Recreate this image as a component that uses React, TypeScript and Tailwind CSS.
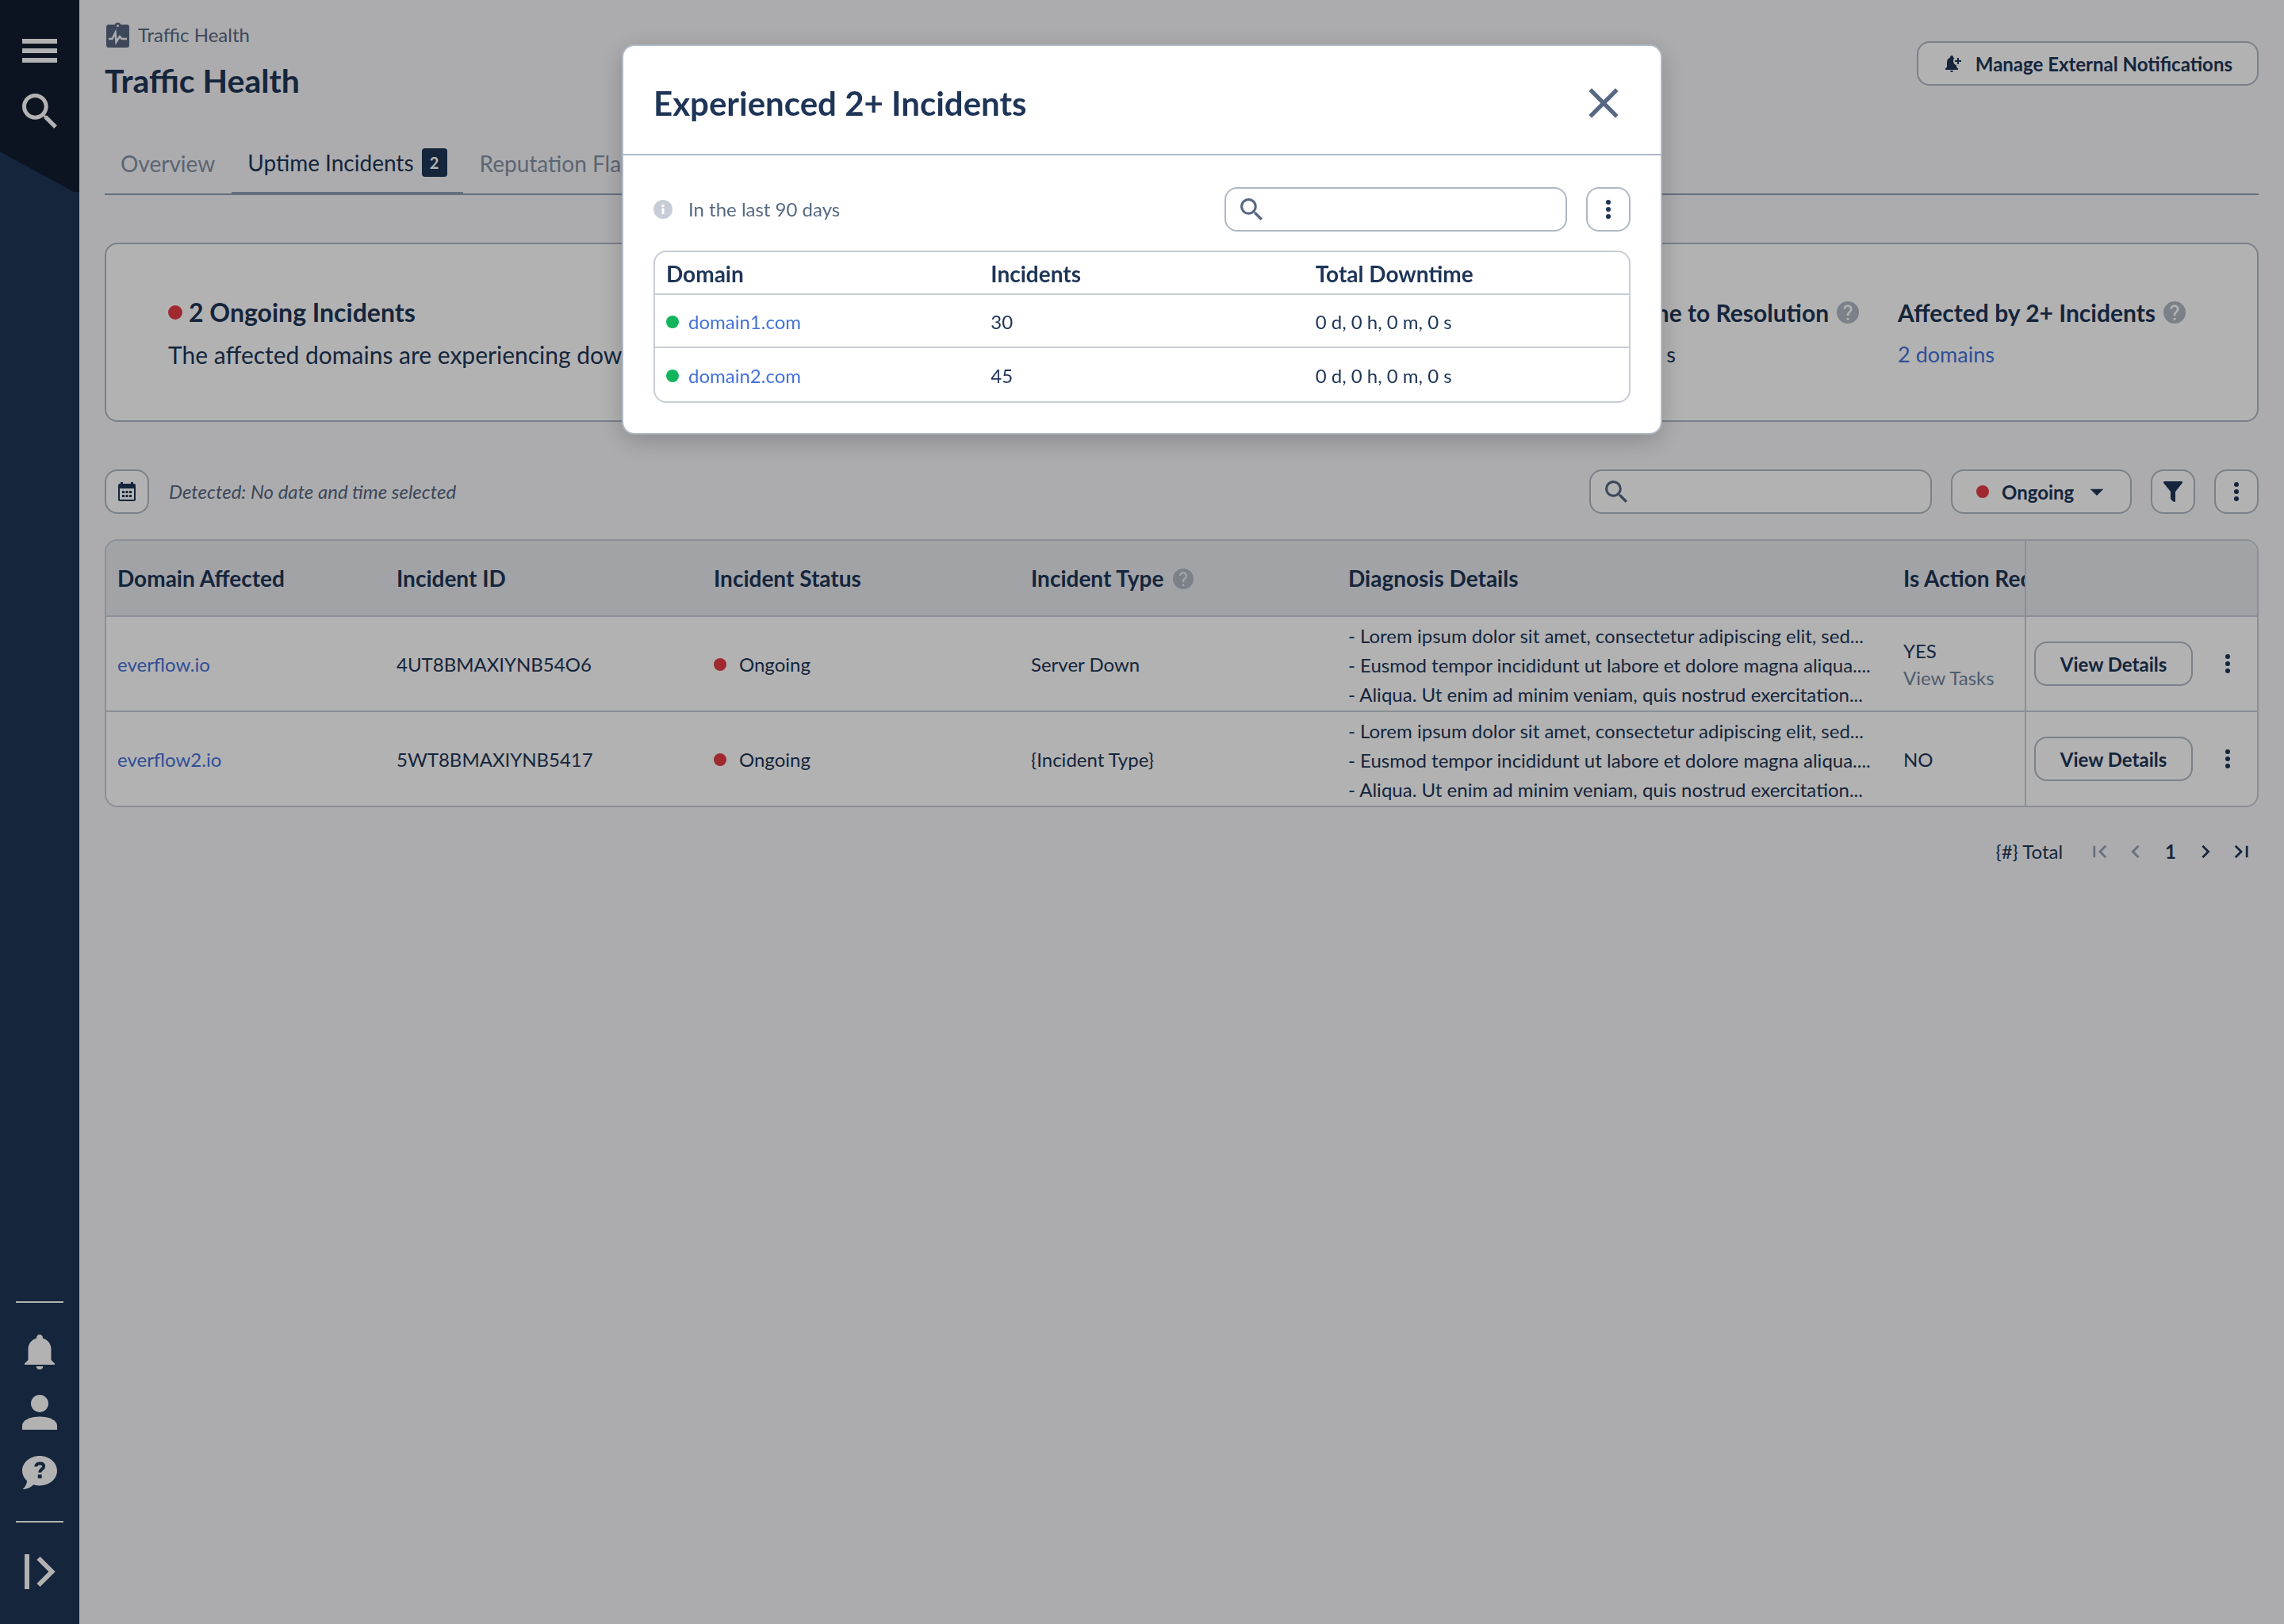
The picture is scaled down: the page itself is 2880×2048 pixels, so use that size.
import type { ReactNode } from "react";
import { MdArrowDropDown, MdClose } from "react-icons/md";

const LINES = [
  "- Lorem ipsum dolor sit amet, consectetur adipiscing elit, sed...",
  "- Eusmod tempor incididunt ut labore et dolore magna aliqua....",
  "- Aliqua. Ut enim ad minim veniam, quis nostrud exercitation...",
];

const incidents = [
  { domain: "everflow.io", id: "4UT8BMAXIYNB54O6", type: "Server Down", action: "YES", tasks: true },
  { domain: "everflow2.io", id: "5WT8BMAXIYNB5417", type: "{Incident Type}", action: "NO", tasks: false },
];

const domains = [
  { name: "domain1.com", count: 30, downtime: "0 d, 0 h, 0 m, 0 s" },
  { name: "domain2.com", count: 45, downtime: "0 d, 0 h, 0 m, 0 s" },
];

export default function App() {
  return (
    <div className="flex min-h-screen bg-[#f6f6f9] font-[Lato,sans-serif] text-2xl text-[#1e3557]">
      <Sidebar />

      <main className="min-w-0 flex-1 px-8 pb-16">
        <header className="flex items-start justify-between pt-6">
          <div>
            <a href="#traffic" className="flex items-center gap-[10px] pl-0.5 text-[#566882]">
              <ClipboardPulse />
              <span className="leading-10">Traffic Health</span>
            </a>
            <h1 className="mt-3 text-[41px] leading-[52px] font-bold">Traffic Health</h1>
          </div>
          <button className="mt-7 flex h-14 items-center gap-4 rounded-2xl border-2 border-[#b0b8c4] bg-white pt-0.5 pr-[31px] pl-[34px] font-bold">
            <BellPlus />
            Manage External Notifications
          </button>
        </header>

        <nav className="mt-10 flex gap-px border-b-2 border-[#919fb3] text-[28px] leading-9 text-[#8491a5]">
          <a href="#overview" className="px-5 pt-5 pb-5">
            Overview
          </a>
          <a
            href="#uptime"
            aria-current="page"
            className="flex items-center gap-[10px] border-b-2 border-[#919fb3] px-5 text-[#1e3557]"
          >
            Uptime Incidents
            <span className="flex h-9 w-8 items-center justify-center rounded bg-[#1e3557] text-xl font-bold text-white">
              2
            </span>
          </a>
          <a href="#reputation" className="px-5 pt-5 pb-5">
            Reputation Flags
          </a>
        </nav>

        <section className="mt-[60px] flex h-[226px] items-center justify-between rounded-2xl border-2 border-[#b0b8c4] bg-white pt-1 pr-[90px] pl-[78px]">
          <div>
            <h2 className="flex items-center gap-2 text-[32px] leading-[52px] font-bold">
              <Dot className="size-[18px] bg-[#e63b46]" />2 Ongoing Incidents
            </h2>
            <p className="text-[30px] leading-[54px]">The affected domains are experiencing downtime.</p>
          </div>
          <div className="flex gap-[49px]">
            <div>
              <h2 className="flex items-center gap-[10px] text-[30px] leading-[52px] font-bold">
                Average Time to Resolution
                <HelpIcon className="size-7" />
              </h2>
              <p className="text-[27px] leading-[54px]">12 h, 30 m, 0 s</p>
            </div>
            <div>
              <h2 className="flex items-center gap-[10px] text-[30px] leading-[52px] font-bold">
                Affected by 2+ Incidents
                <HelpIcon className="size-7" />
              </h2>
              <a href="#domains" className="text-[27px] leading-[54px] text-[#4472d8]">
                2 domains
              </a>
            </div>
          </div>
        </section>

        <div className="mt-[60px] flex items-center gap-6">
          <IconButton label="Pick dates">
            <CalendarIcon />
          </IconButton>
          <p className="flex-1 pl-px text-[#566882] italic">Detected: No date and time selected</p>
          <SearchField label="Search incidents" />
          <div className="relative">
            <select
              aria-label="Status"
              className="block h-14 w-[228px] appearance-none rounded-2xl border-2 border-[#b0b8c4] bg-white pt-0.5 pl-[62px] font-bold"
            >
              <option>Ongoing</option>
            </select>
            <Dot className="pointer-events-none absolute top-5 left-8 size-4 bg-[#e63b46]" />
            <MdArrowDropDown className="pointer-events-none absolute top-2 right-6 size-10" />
          </div>
          <IconButton label="Filter">
            <svg viewBox="4 3 16 18" className="h-[26px] w-6" fill="currentColor" preserveAspectRatio="none">
              <path d="M14 12v7.88c.04.3-.06.62-.29.83a1 1 0 0 1-1.41 0l-2.01-2.01a1 1 0 0 1-.29-.83V12h-.03L4.21 4.62a1 1 0 0 1 .17-1.4c.19-.14.4-.22.62-.22h14c.22 0 .43.08.62.22a1 1 0 0 1 .17 1.4L14.03 12z" />
            </svg>
          </IconButton>
          <IconButton label="More options">
            <MoreIcon />
          </IconButton>
        </div>

        <div className="mt-8 overflow-hidden rounded-2xl border-2 border-[#c8ccd6] bg-white">
          <table className="w-full table-fixed border-separate border-spacing-0 text-left">
            <colgroup>
              <col className="w-[352px]" />
              <col className="w-[400px]" />
              <col className="w-[400px]" />
              <col className="w-[400px]" />
              <col />
              <col className="w-[167px]" />
              <col className="w-[293px]" />
            </colgroup>
            <thead className="bg-[#e9eaf0] text-[28px]">
              <tr>
                <HeadCell>Domain Affected</HeadCell>
                <HeadCell>Incident ID</HeadCell>
                <HeadCell>Incident Status</HeadCell>
                <HeadCell>
                  <span className="flex items-center gap-3">
                    Incident Type
                    <HelpIcon className="size-[26px]" />
                  </span>
                </HeadCell>
                <HeadCell>Diagnosis Details</HeadCell>
                <HeadCell>Is Action Required</HeadCell>
                <th aria-label="Actions" className="border-b-2 border-l-2 border-[#c8ccd6]" />
              </tr>
            </thead>
            <tbody className="[&>tr:last-child>td]:h-[118px] [&>tr:last-child>td]:border-b-0">
              {incidents.map((row) => (
                <tr key={row.id}>
                  <Cell>
                    <a href={`#${row.domain}`} className="text-[#4472d8]">
                      {row.domain}
                    </a>
                  </Cell>
                  <Cell>{row.id}</Cell>
                  <Cell>
                    <span className="flex items-center gap-4">
                      <Dot className="size-4 bg-[#e63b46]" />
                      Ongoing
                    </span>
                  </Cell>
                  <Cell>{row.type}</Cell>
                  <Cell>
                    {LINES.map((line) => (
                      <p key={line} className="leading-[37px]">
                        {line}
                      </p>
                    ))}
                  </Cell>
                  <Cell>
                    <p className="leading-[34px]">{row.action}</p>
                    {row.tasks && (
                      <a href="#tasks" className="block leading-[34px] text-[#7385a0]">
                        View Tasks
                      </a>
                    )}
                  </Cell>
                  <td className="h-[120px] border-b-2 border-l-2 border-[#c8ccd6] pl-[10px]">
                    <div className="flex items-center gap-8">
                      <button className="h-14 w-[200px] rounded-2xl border-2 border-[#b0b8c4] bg-white pt-0.5 font-bold">
                        View Details
                      </button>
                      <button aria-label="Row options">
                        <MoreIcon />
                      </button>
                    </div>
                  </td>
                </tr>
              ))}
            </tbody>
          </table>
        </div>

        <nav aria-label="Pagination" className="mt-10 flex items-center justify-end pr-[13px]">
          <span className="mr-[38px]">{"{#} Total"}</span>
          <div className="flex items-center gap-[27px]">
            <PageButton label="First page" disabled>
              <path d="M2 2v16M18 2l-8 8 8 8" />
            </PageButton>
            <PageButton label="Previous page" disabled>
              <path d="M14 2l-8 8 8 8" />
            </PageButton>
            <span className="px-px font-bold">1</span>
            <PageButton label="Next page">
              <path d="M6 2l8 8-8 8" />
            </PageButton>
            <PageButton label="Last page">
              <path d="M2 2l8 8-8 8M18 2v16" />
            </PageButton>
          </div>
        </nav>
      </main>

      <div className="fixed inset-0 flex items-start justify-center bg-black/30 pt-14">
        <IncidentsDialog />
      </div>
    </div>
  );
}

function Sidebar() {
  return (
    <aside className="flex w-[100px] shrink-0 flex-col items-center bg-[#1e3557] text-white">
      <div className="flex h-[242px] w-full flex-col items-center bg-[#111d2f] pt-[49px] [clip-path:polygon(0_0,100%_0,100%_100%,93%_100%,0_79%)]">
        <button aria-label="Menu">
          <svg viewBox="0 0 44 30" className="h-[30px] w-11" fill="currentColor">
            <path d="M0 0h44v6H0zM0 12h44v6H0zM0 24h44v6H0z" />
          </svg>
        </button>
        <button aria-label="Search" className="mt-[39px]">
          <SearchIcon className="size-11" />
        </button>
      </div>

      <div className="mt-auto flex w-full flex-col items-center pb-11">
        <hr className="w-[60px] border-t-2 border-white" />
        <button aria-label="Notifications" className="mt-10">
          <svg viewBox="0 0 38 44" className="h-11 w-[38px]" fill="currentColor">
            <path d="M19 0c2.300 0 4 1.700 4 4v.7C29 6.300 33.500 11.500 33.500 18v14l4.500 4.500V38H0v-1.500L4.500 32V18C4.500 11.500 9 6.300 15 4.700V4c0-2.300 1.700-4 4-4zM14.700 40h8.600c0 2.400-1.900 4-4.300 4s-4.300-1.600-4.300-4z" />
          </svg>
        </button>
        <button aria-label="Account" className="mt-8">
          <svg viewBox="0 0 44 44" className="size-11" fill="currentColor">
            <circle cx="22" cy="11" r="11" />
            <path d="M22 27.500c-12.200 0-22 4.900-22 11V44h44v-5.500c0-6.100-9.800-11-22-11z" />
          </svg>
        </button>
        <button aria-label="Help" className="mt-[33px]">
          <svg viewBox="0 0 44 42" className="h-[42px] w-11" fill="currentColor">
            <path d="M22 0c12.150 0 22 8.300 22 18.700s-9.850 18.700-22 18.700c-2.700 0-5.300-.4-7.700-1.200C11 39.500 6.500 42 .6 42c3.200-3 5.200-6.500 5.400-10.500C2.300 28.200 0 23.700 0 18.700 0 8.300 9.850 0 22 0z" />
            <path
              d="M17.300 13.500c0-2.400 1.900-4 4.900-4s5 1.400 5 3.800c0 3.200-5 3.500-5 7.700"
              fill="none"
              stroke="#1e3557"
              strokeWidth="4"
            />
            <path d="M19.800 23.500h4.800v4.800h-4.800z" fill="#1e3557" />
          </svg>
        </button>
        <hr className="mt-10 w-[60px] border-t-2 border-white" />
        <button aria-label="Expand sidebar" className="mt-10">
          <svg viewBox="0 0 40 44" className="h-11 w-10" fill="none" stroke="currentColor" strokeWidth="6">
            <path d="M4 0v44M18.500 5l17 17-17 17" />
          </svg>
        </button>
      </div>
    </aside>
  );
}

function IncidentsDialog() {
  return (
    <div
      role="dialog"
      aria-labelledby="dialog-title"
      className="w-full max-w-[1312px] rounded-2xl border-2 border-[#b0b8c4] bg-white shadow-[0_8px_32px_rgba(0,0,0,0.2)]"
    >
      <div className="flex h-[138px] items-center justify-between border-b-2 border-[#b0b8c4] pt-2 pr-[52px] pl-[38px]">
        <h2 id="dialog-title" className="text-[42px] font-bold">
          Experienced 2+ Incidents
        </h2>
        <button aria-label="Close" className="text-[#566882]">
          <MdClose viewBox="4.500 4.500 15 15" className="size-10" />
        </button>
      </div>

      <div className="px-[38px] pt-10 pb-[38px]">
        <div className="flex items-center gap-6">
          <p className="flex flex-1 items-center gap-5 text-[#566882]">
            <svg viewBox="0 0 24 24" className="size-6 text-[#c8ccd6]" fill="currentColor">
              <circle cx="12" cy="12" r="12" />
              <path d="M10.500 6h3v3h-3zM10.500 10.500h3V18h-3z" fill="#fff" />
            </svg>
            In the last 90 days
          </p>
          <SearchField label="Search domains" />
          <IconButton label="More options">
            <MoreIcon />
          </IconButton>
        </div>

        <div className="mt-6 overflow-hidden rounded-2xl border-2 border-[#c8ccd6]">
          <table className="w-full table-fixed border-separate border-spacing-0 text-left">
            <thead className="text-[28px]">
              <tr>
                {["Domain", "Incidents", "Total Downtime"].map((title) => (
                  <th key={title} className="h-[54px] border-b-2 border-[#c8ccd6] pt-0.5 pl-[14px] leading-10">
                    {title}
                  </th>
                ))}
              </tr>
            </thead>
            <tbody className="[&>tr:last-child>td]:border-b-0">
              {domains.map((row) => (
                <tr
                  key={row.name}
                  className="[&>td]:h-[67px] [&>td]:border-b-2 [&>td]:border-[#c8ccd6] [&>td]:pt-[3px] [&>td]:pl-[14px]"
                >
                  <td>
                    <span className="flex items-center gap-3">
                      <Dot className="size-4 bg-[#12b55c]" />
                      <a href={`#${row.name}`} className="text-[#4472d8]">
                        {row.name}
                      </a>
                    </span>
                  </td>
                  <td>{row.count}</td>
                  <td>{row.downtime}</td>
                </tr>
              ))}
            </tbody>
          </table>
        </div>
      </div>
    </div>
  );
}

function HeadCell({ children }: { children: ReactNode }) {
  return (
    <th className="h-24 overflow-hidden border-b-2 border-[#c8ccd6] pt-0.5 pl-[14px] whitespace-nowrap">{children}</th>
  );
}

function Cell({ children }: { children: ReactNode }) {
  return (
    <td className="h-[120px] overflow-hidden border-b-2 border-[#c8ccd6] pt-0.5 pl-[14px] whitespace-nowrap">
      {children}
    </td>
  );
}

function IconButton({ label, children }: { label: string; children: ReactNode }) {
  return (
    <button
      aria-label={label}
      className="flex size-14 shrink-0 items-center justify-center rounded-2xl border-2 border-[#b0b8c4] bg-white"
    >
      {children}
    </button>
  );
}

function SearchField({ label }: { label: string }) {
  return (
    <div className="relative">
      <input
        type="search"
        aria-label={label}
        className="block h-14 w-[432px] rounded-2xl border-2 border-[#b0b8c4] bg-white pr-4 pl-14"
      />
      <SearchIcon className="pointer-events-none absolute top-[14px] left-5 size-7 text-[#566882]" />
    </div>
  );
}

function PageButton({ label, disabled, children }: { label: string; disabled?: boolean; children: ReactNode }) {
  return (
    <button aria-label={label} disabled={disabled} className="disabled:text-[#919fb3]">
      <svg viewBox="0 0 20 20" className="size-[18px]" fill="none" stroke="currentColor" strokeWidth="3">
        {children}
      </svg>
    </button>
  );
}

function Dot({ className }: { className: string }) {
  return <span className={`shrink-0 rounded-full ${className}`} />;
}

function SearchIcon({ className }: { className: string }) {
  return (
    <svg viewBox="3 3 17.500 17.500" className={className} fill="currentColor">
      <path d="M15.500 14h-.79l-.28-.27A6.470 6.470 0 0 0 16 9.500 6.500 6.500 0 1 0 9.500 16c1.610 0 3.090-.59 4.230-1.570l.27.28v.79l5 4.990L20.490 19l-4.990-5zm-6 0C7.010 14 5 11.990 5 9.500S7.010 5 9.500 5 14 7.010 14 9.500 11.990 14 9.500 14z" />
    </svg>
  );
}

function HelpIcon({ className }: { className: string }) {
  return (
    <svg viewBox="2 2 20 20" className={`shrink-0 text-[#b0b8c4] ${className}`} fill="currentColor">
      <path d="M12 2a10 10 0 1 0 0 20 10 10 0 0 0 0-20zm1 17h-2v-2h2v2zm2.070-7.750-.9.920C13.450 12.900 13 13.500 13 15h-2v-.5c0-1.100.45-2.100 1.170-2.830l1.240-1.260c.37-.36.59-.86.59-1.410a2 2 0 1 0-4 0H8a4 4 0 1 1 8 0c0 .88-.36 1.680-.93 2.250z" />
    </svg>
  );
}

function MoreIcon() {
  return (
    <svg viewBox="0 0 24 24" className="size-6" fill="currentColor">
      <circle cx="12" cy="3" r="3" />
      <circle cx="12" cy="12" r="3" />
      <circle cx="12" cy="21" r="3" />
    </svg>
  );
}

function CalendarIcon() {
  return (
    <svg viewBox="0 0 22 24" className="h-6 w-[22px]" fill="currentColor" fillRule="evenodd">
      <path d="M3 0h3v2h10V0h3v2h1a2 2 0 0 1 2 2v18a2 2 0 0 1-2 2H2a2 2 0 0 1-2-2V4a2 2 0 0 1 2-2h1zM2 8v14h18V8zM5 11h3v3H5zM9.500 11h3v3h-3zM14 11h3v3h-3zM5 16h3v3H5zM9.500 16h3v3h-3zM14 16h3v3h-3z" />
    </svg>
  );
}

function BellPlus() {
  return (
    <svg viewBox="0 0 22 22" className="size-[22px]" fill="currentColor">
      <path d="M8 0a2 2 0 0 0-2 2v.5C3.500 3.300 2 5.800 2 9v5.500L0 16.500V18h16v-1.500l-2-2v-2.300A5.500 5.500 0 0 1 10 7c0-1.600.5-2.700 1.400-3.700L10 2.500V2a2 2 0 0 0-2-2zM6 19h4a2 2 0 0 1-4 0zM15 3h2v3h3v2h-3v3h-2V8h-3V6h3z" />
    </svg>
  );
}

function ClipboardPulse() {
  return (
    <svg viewBox="0 0 30 32" className="h-8 w-[30px]">
      <path
        d="M3 3h7.500a4.500 4.500 0 0 1 8 0H26a3 3 0 0 1 3 3v23a3 3 0 0 1-3 3H3a3 3 0 0 1-3-3V6a3 3 0 0 1 3-3z"
        fill="currentColor"
      />
      <circle cx="14.500" cy="4.500" r="1.500" fill="#f6f6f9" />
      <path d="M3 21h4.500l4-8 1 12 4.500-7 2.500 3H26" fill="none" stroke="#f6f6f9" strokeWidth="2.500" />
    </svg>
  );
}
